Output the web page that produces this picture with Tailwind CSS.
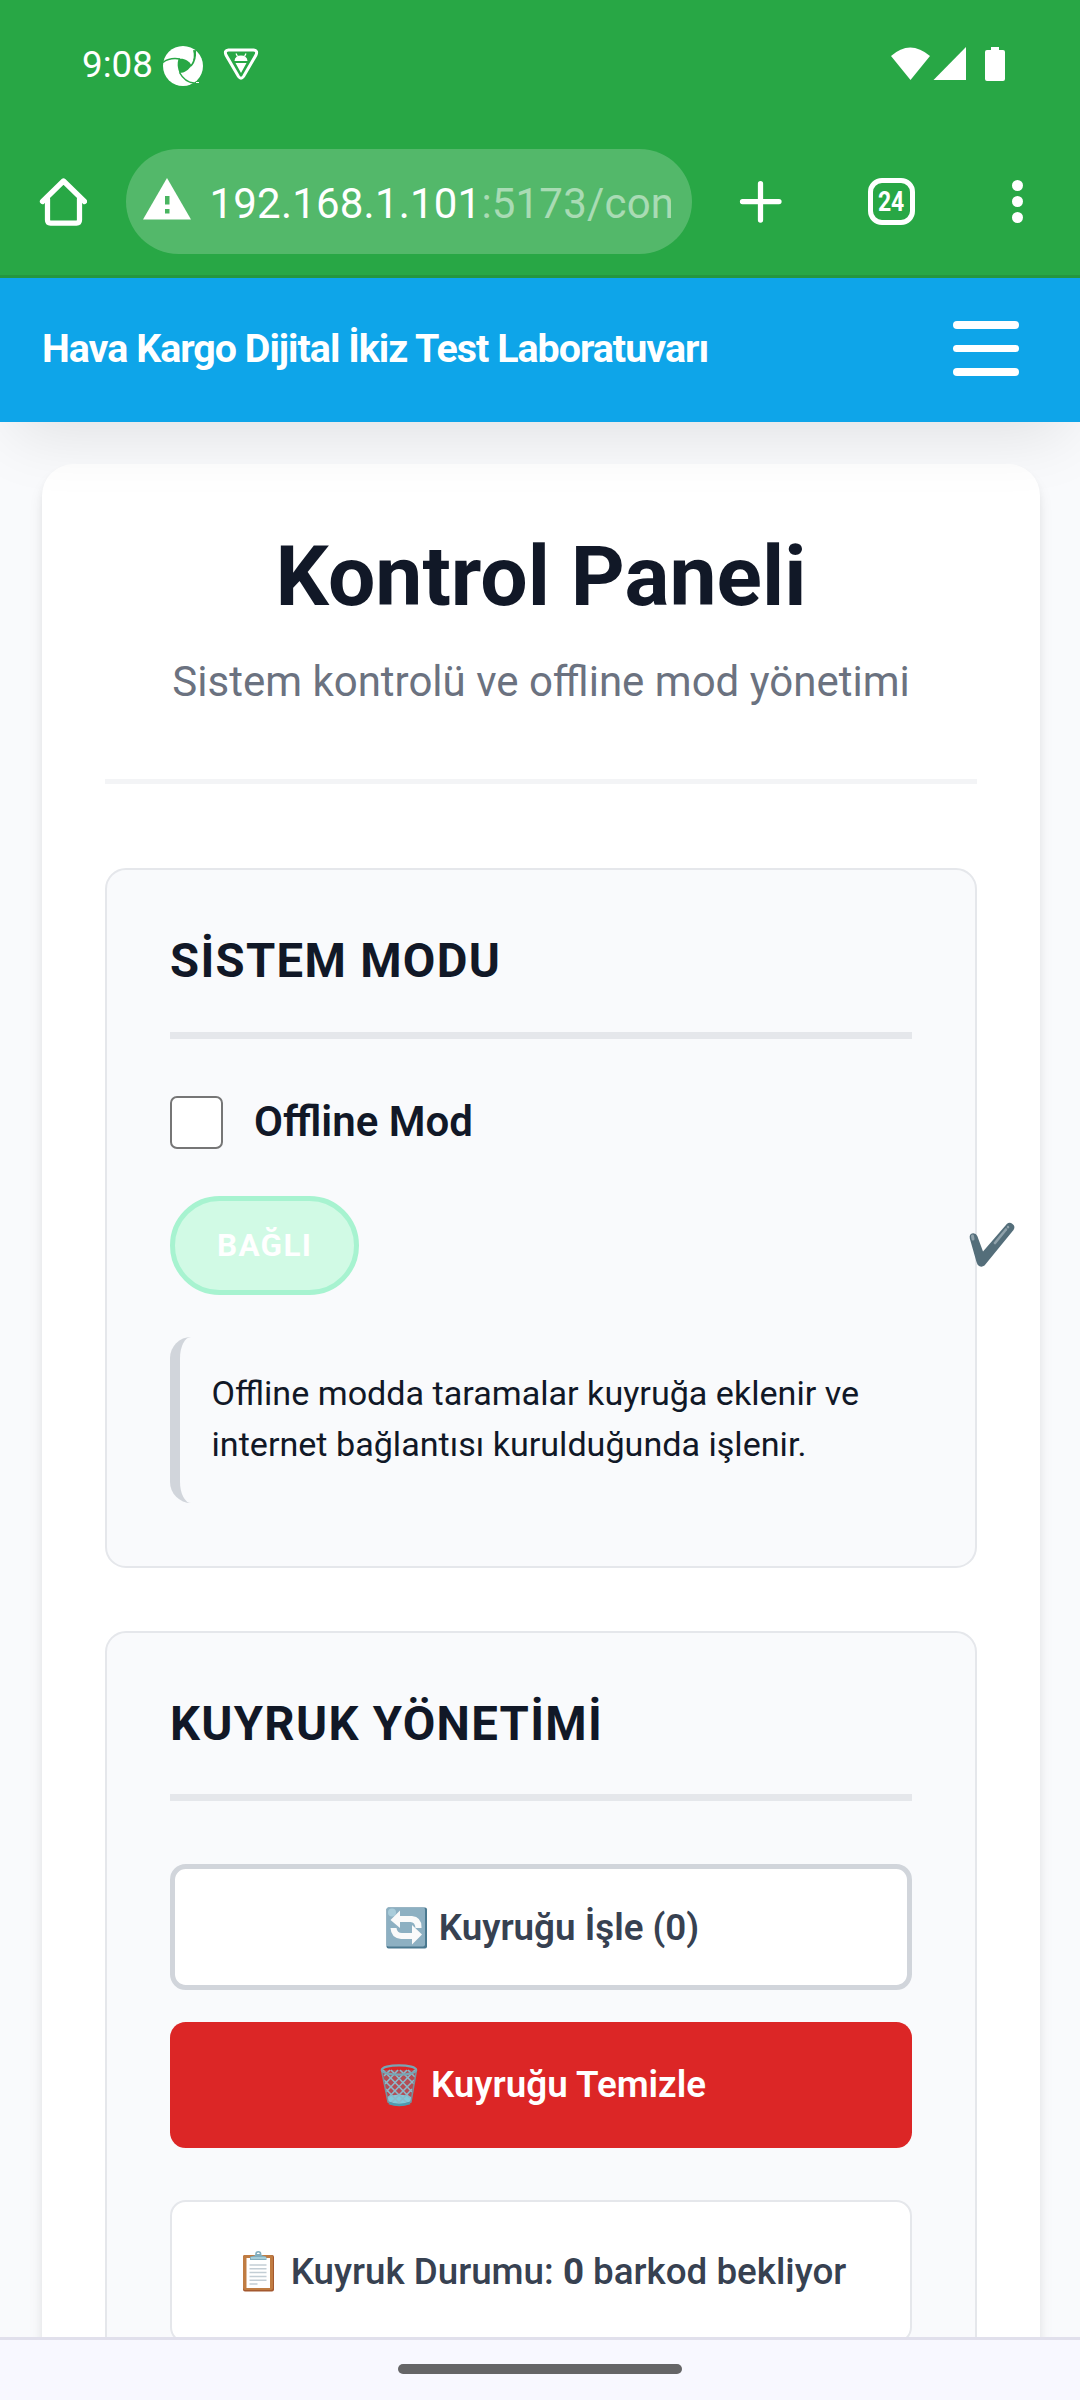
<!DOCTYPE html>
<html lang="tr">
<head>
<meta charset="utf-8">
<title>Kontrol Paneli</title>
<script src="https://cdn.jsdelivr.net/npm/@tailwindcss/browser@4"></script>
</head>
<body class="bg-[#f9fafb]">
<div class="relative flex h-[2400px] w-[1080px] flex-col overflow-hidden bg-[#f9fafc] font-[Roboto,sans-serif] text-[#111827]">

  <!-- Android status bar and browser toolbar -->
  <div class="relative z-20 h-[278px] shrink-0 border-b-3 border-[#24963e] bg-[#28a745] text-white">
    <div class="flex h-[128px] items-center pl-[82px] pr-[75px]">
      <span class="mt-[2px] w-[81px] text-[36.750px] leading-[44px]">9:08</span>
      <svg class="mt-[3px] h-10 w-10" viewBox="0 0 40 40">
        <circle cx="20" cy="20" r="20" fill="#fff"/>
        <path d="M15.500 13 C20 11.800 26 14 28.500 19.500 C26 23.500 21.500 27 16.500 27 C14.500 22 14 17 15.500 13Z" fill="#28a745"/>
        <g fill="none" stroke="#28a745" stroke-width="1.500"><path d="M0 16.500 C5 12.500 11 12 17 13"/><path d="M32 4 C33 11 31.500 16 28 20"/><path d="M16.500 26.500 C19.500 32 25 36.500 31 37"/></g>
        <path d="M30 4 L33 5 C32.500 11 31 15 28 19.500 C31 14 31.500 9 30 4Z" fill="#28a745"/>
        <path d="M27 39 L38 33 L36 37 L32 40Z" fill="#28a745"/><path d="M33 36.500h3" stroke="#fff"/>
      </svg>
      <svg class="ml-[20px] h-[34px] w-[36px]" viewBox="0 0 36 34">
        <path d="M5.500 3 H30.500 Q35 3.500 33 8 L20.500 29.500 Q18 33 15.500 29.500 L3 8 Q1 3.500 5.500 3Z" fill="none" stroke="#fff" stroke-width="3"/>
        <path d="M11.500 14 Q12 8.500 18 8.500 Q24 8.500 24.500 14Z M12.500 16 H23.500 L18 26Z" fill="#fff"/>
        <path d="M14.500 9.500 L13 6.500 M21.500 9.500 L23 6.500" stroke="#fff" stroke-width="1.300"/>
      </svg>
      <svg class="ml-auto h-[34px] w-[115px]" viewBox="0 0 115 34" fill="#fff">
        <path d="M1 9 Q20 -8 40 9 L20.500 33Z"/>
        <path d="M76 0 V33 H43.500Z"/>
        <path d="M101 0 h8 v3 h4 q2 0 2 2 v27 q0 2 -2 2 h-16 q-2 0 -2 -2 v-27 q0 -2 2 -2 h4Z"/>
      </svg>
    </div>
    <div class="flex h-[147px] items-center pl-[39px]">
      <svg class="h-12 w-12" viewBox="0 0 48 48" fill="none" stroke="#fff" stroke-width="5.250" stroke-linecap="round" stroke-linejoin="round"><path d="M3.500 23.500 L24.500 3 L45.500 23.500"/><path d="M8.500 21 V42 Q8.500 45 11.500 45 H37.500 Q40.500 45 40.500 42 V21"/></svg>
      <div class="ml-[39px] flex h-[105px] w-[566px] items-center rounded-full bg-white/20 pl-[17px]">
        <svg class="-mt-1.5 h-[42px] w-[48px] shrink-0" viewBox="0 0 48 42"><path d="M24 0 L48 41.500 H0Z" fill="#fff"/><path d="M22 18h4.500v8.500h-4.500z M22 31h4.500v4.500h-4.500z" fill="#49b561"/></svg>
        <div class="ml-[18.500px] mt-1 w-[461px] overflow-hidden whitespace-nowrap text-[42px] leading-[50px] tracking-[0.2px]">192.168.1.101<span class="text-white/50">:5173/con</span></div>
      </div>
      <svg class="ml-[47px] h-11 w-11" viewBox="0 0 44 44" stroke="#fff" stroke-width="5.250" stroke-linecap="round"><path d="M21.500 3.500V40M3.500 21.500H40"/></svg>
      <div class="ml-[85px] flex h-[47px] w-[47px] items-center justify-center rounded-[14px] border-[5.250px] border-white">
        <span class="scale-x-[0.82] text-[28px] font-bold leading-none">24</span>
      </div>
      <div class="ml-[97px] flex flex-col gap-[5.500px]"><i class="size-[10.500px] rounded-full bg-white"></i><i class="size-[10.500px] rounded-full bg-white"></i><i class="size-[10.500px] rounded-full bg-white"></i></div>
    </div>
  </div>

  <!-- App header -->
  <header class="relative z-10 flex h-[144px] shrink-0 items-center justify-between bg-[#0ea5e9] pb-[3px] pl-[42px] pr-[61px] text-white shadow-[0_26px_66px_-13px_rgb(0_0_0/0.1)]">
    <div class="whitespace-nowrap text-[39.400px] font-bold leading-[48px] tracking-[-1px]">Hava Kargo Dijital İkiz Test Laboratuvarı</div>
    <div class="flex flex-col gap-4"><i class="h-[7.700px] w-[66px] rounded-full bg-white"></i><i class="h-[7.700px] w-[66px] rounded-full bg-white"></i><i class="h-[7.700px] w-[66px] rounded-full bg-white"></i></div>
  </header>

  <!-- Control panel card -->
  <main class="mx-[42px] mt-[42px] w-[998px] shrink-0 rounded-[31.500px] bg-white px-[63px] pb-[63px] pt-[63px] shadow-[0_10.500px_15.750px_-2.600px_rgb(0_0_0/0.1),0_5px_10px_-2.600px_rgb(0_0_0/0.06)]">
    <div class="flex flex-col items-center border-b-5 border-[#f3f4f6] pb-[66px]">
      <h1 class="text-[84px] font-bold leading-[99px]">Kontrol Paneli</h1>
      <p class="mt-6 text-[42px] leading-[63px] text-[#6b7280]">Sistem kontrolü ve offline mod yönetimi</p>
    </div>

    <section class="relative mt-[84px] h-[700px] rounded-[21px] border-2 border-[#e5e7eb] bg-[#f9fafc] px-[63px] pt-[64px]">
      <h2 class="border-b-7 border-[#e5e7eb] pb-[43px] text-[47.250px] font-bold leading-[55px] tracking-[1.310px]">SİSTEM MODU</h2>
      <label class="mt-[57px] flex h-[53px] items-center">
        <span class="size-[52.500px] rounded-[7px] border-[2.500px] border-[#767676] bg-white"></span>
        <span class="-mt-[2px] ml-[31.500px] text-[42px] font-semibold leading-[53px]">Offline Mod</span>
      </label>
      <div class="mt-[47px] flex h-[99px] w-[189px] items-center rounded-full border-5 border-[#a7f3d0] bg-[#d1fae5] pl-[42px] text-[31.500px] font-bold tracking-[1.310px] text-white">BAĞLI</div>
      <p class="mt-[42px] whitespace-nowrap rounded-[21px] border-l-10 border-[#d1d5db] pb-[33px] pl-[31.500px] pt-[31px] text-[34.120px] leading-[51px]">Offline modda taramalar kuyruğa eklenir ve<br>internet bağlantısı kurulduğunda işlenir.</p>
      <svg class="absolute left-[859.500px] top-[350px] h-[50px] w-[50px]" viewBox="0 0 50 50" fill="none" stroke-linecap="round" stroke-linejoin="round">
        <path d="M2.800 14.500 Q2 9.500 6 9.200 Q9 9 10.300 12 L16 27.500 L39.800 -0 Q42.500 -2.500 45.500 0 Q48.800 2.500 46.500 6 L17.500 41.500 Q14 44 10.800 41 L9.500 38Z" transform="translate(0 4)" fill="#546e7a"/>
        <path d="M5.500 16 L6 19" stroke="#8fa1aa" stroke-width="3"/><path d="M28 23 L39 9.500" stroke="#8fa1aa" stroke-width="2.600"/><path d="M41 7v.2" stroke="#8fa1aa" stroke-width="2.400"/>
      </svg>
    </section>

    <section class="mt-[63px] rounded-[21px] border-2 border-[#e5e7eb] bg-[#f9fafc] px-[63px] pb-[63px] pt-[64px]">
      <h2 class="border-b-7 border-[#e5e7eb] pb-[42px] text-[47.250px] font-bold leading-[55px] tracking-[1.310px]">KUYRUK YÖNETİMİ</h2>
      <div class="mt-[63px] flex flex-col gap-8 text-[36.750px]">
        <button class="flex h-[126px] items-center justify-center gap-[9px] rounded-[15.750px] border-5 border-[#d1d5db] bg-white pl-[1px] pt-[2px] font-semibold text-[#374151]">
          <svg class="size-[46px]" viewBox="0 0 46 46">
            <rect x="2.500" y="2.500" width="40.500" height="41" rx="2" fill="#4a7990"/><rect x="2.500" y="2.500" width="38.500" height="39" rx="2" fill="#8db0c2"/>
            <circle cx="8" cy="7.500" r="4" fill="#a9ccda"/>
            <path d="M6.500 15 L16 5.500 V11 H28 Q37.500 12 37.500 22 V23 H31.500 Q31 17 26.500 17 H16 V23Z" fill="#fafafa"/>
            <path d="M38 29.500 L28 39.500 V34 H17 Q7 33 6.500 23 H12.500 Q13 28 18 28 H28 V20Z" fill="#fafafa"/>
          </svg>
          <span>Kuyruğu İşle (0)</span>
        </button>
        <button class="flex h-[126px] items-center justify-center gap-[8px] rounded-[15.750px] bg-[#dc2626] pl-[1px] font-semibold text-white">
          <svg class="size-[46px]" viewBox="0 0 46 46" fill="none">
            <path d="M5 8 L11 40 Q22 46 34 40 L39 8Z" fill="#b34d55"/>
            <path d="M10 35 Q22 30 34.500 35 L33.500 40.500 Q22 46 11.500 40.500Z" fill="#81c9da"/>
            <path d="M6 8L33 36M14 8L35 30M23 8L37 22M31 8L38 15M7 18L31 42M9 27L24 43M38 8L11 36M30 8L9 30M21 8L8 22M13 8L7 14M37 18L13 42M35 27L20 43" stroke="#8bb9c9" stroke-width="1.600"/>
            <path d="M4.500 8 L11 40 Q22 46 34 40 L39.500 8" stroke="#78909c" stroke-width="1.500"/>
            <path d="M12 41 Q22 45 33 41" stroke="#4f9bb0" stroke-width="2.500"/>
            <ellipse cx="22" cy="8" rx="17.200" ry="4.700" stroke="#78a5b4" stroke-width="2.200"/>
          </svg>
          <span>Kuyruğu Temizle</span>
        </button>
      </div>
      <div class="mt-[52px] flex h-[143px] items-center justify-center gap-[9px] rounded-[15.750px] border-2 border-[#e5e7eb] bg-white pt-[1px] text-[36.750px] font-medium text-[#374151]">
        <svg class="size-[46px]" viewBox="0 0 46 46">
          <rect x="7" y="6" width="31" height="36.500" rx="2" fill="#a4592f"/><rect x="7" y="6" width="30" height="35" rx="2" fill="#c07c42"/>
          <rect x="10.500" y="9" width="23.500" height="30" fill="#fff"/>
          <path d="M13.500 16h17M13.500 19.800h17M13.500 23.600h17M13.500 27.400h17M13.500 31.200h17M13.500 35h8" stroke="#c3ced5" stroke-width="1.500"/>
          <circle cx="22.300" cy="5" r="2.300" fill="none" stroke="#82aebe" stroke-width="1.600"/>
          <path d="M14 11 V8.500 Q14 7 17 7 Q19 6.800 20 5 H24.500 Q26 7 28 7 Q30.500 7 30.500 8.500 V11Z" fill="#82aebe"/><path d="M15 9h15" stroke="#b1d9e3" stroke-width="1.500"/>
        </svg>
        <span class="whitespace-nowrap">Kuyruk Durumu: <strong class="font-bold">0</strong> barkod bekliyor</span>
      </div>
    </section>
  </main>

  <!-- Gesture navigation bar -->
  <nav class="absolute inset-x-0 bottom-0 z-30 flex h-[63px] justify-center border-t-3 border-[#e1e0ec] bg-[#f8f8ff] pt-6">
    <div class="h-[10px] w-[284px] rounded-full bg-[#656567]"></div>
  </nav>
</div>
</body>
</html>
